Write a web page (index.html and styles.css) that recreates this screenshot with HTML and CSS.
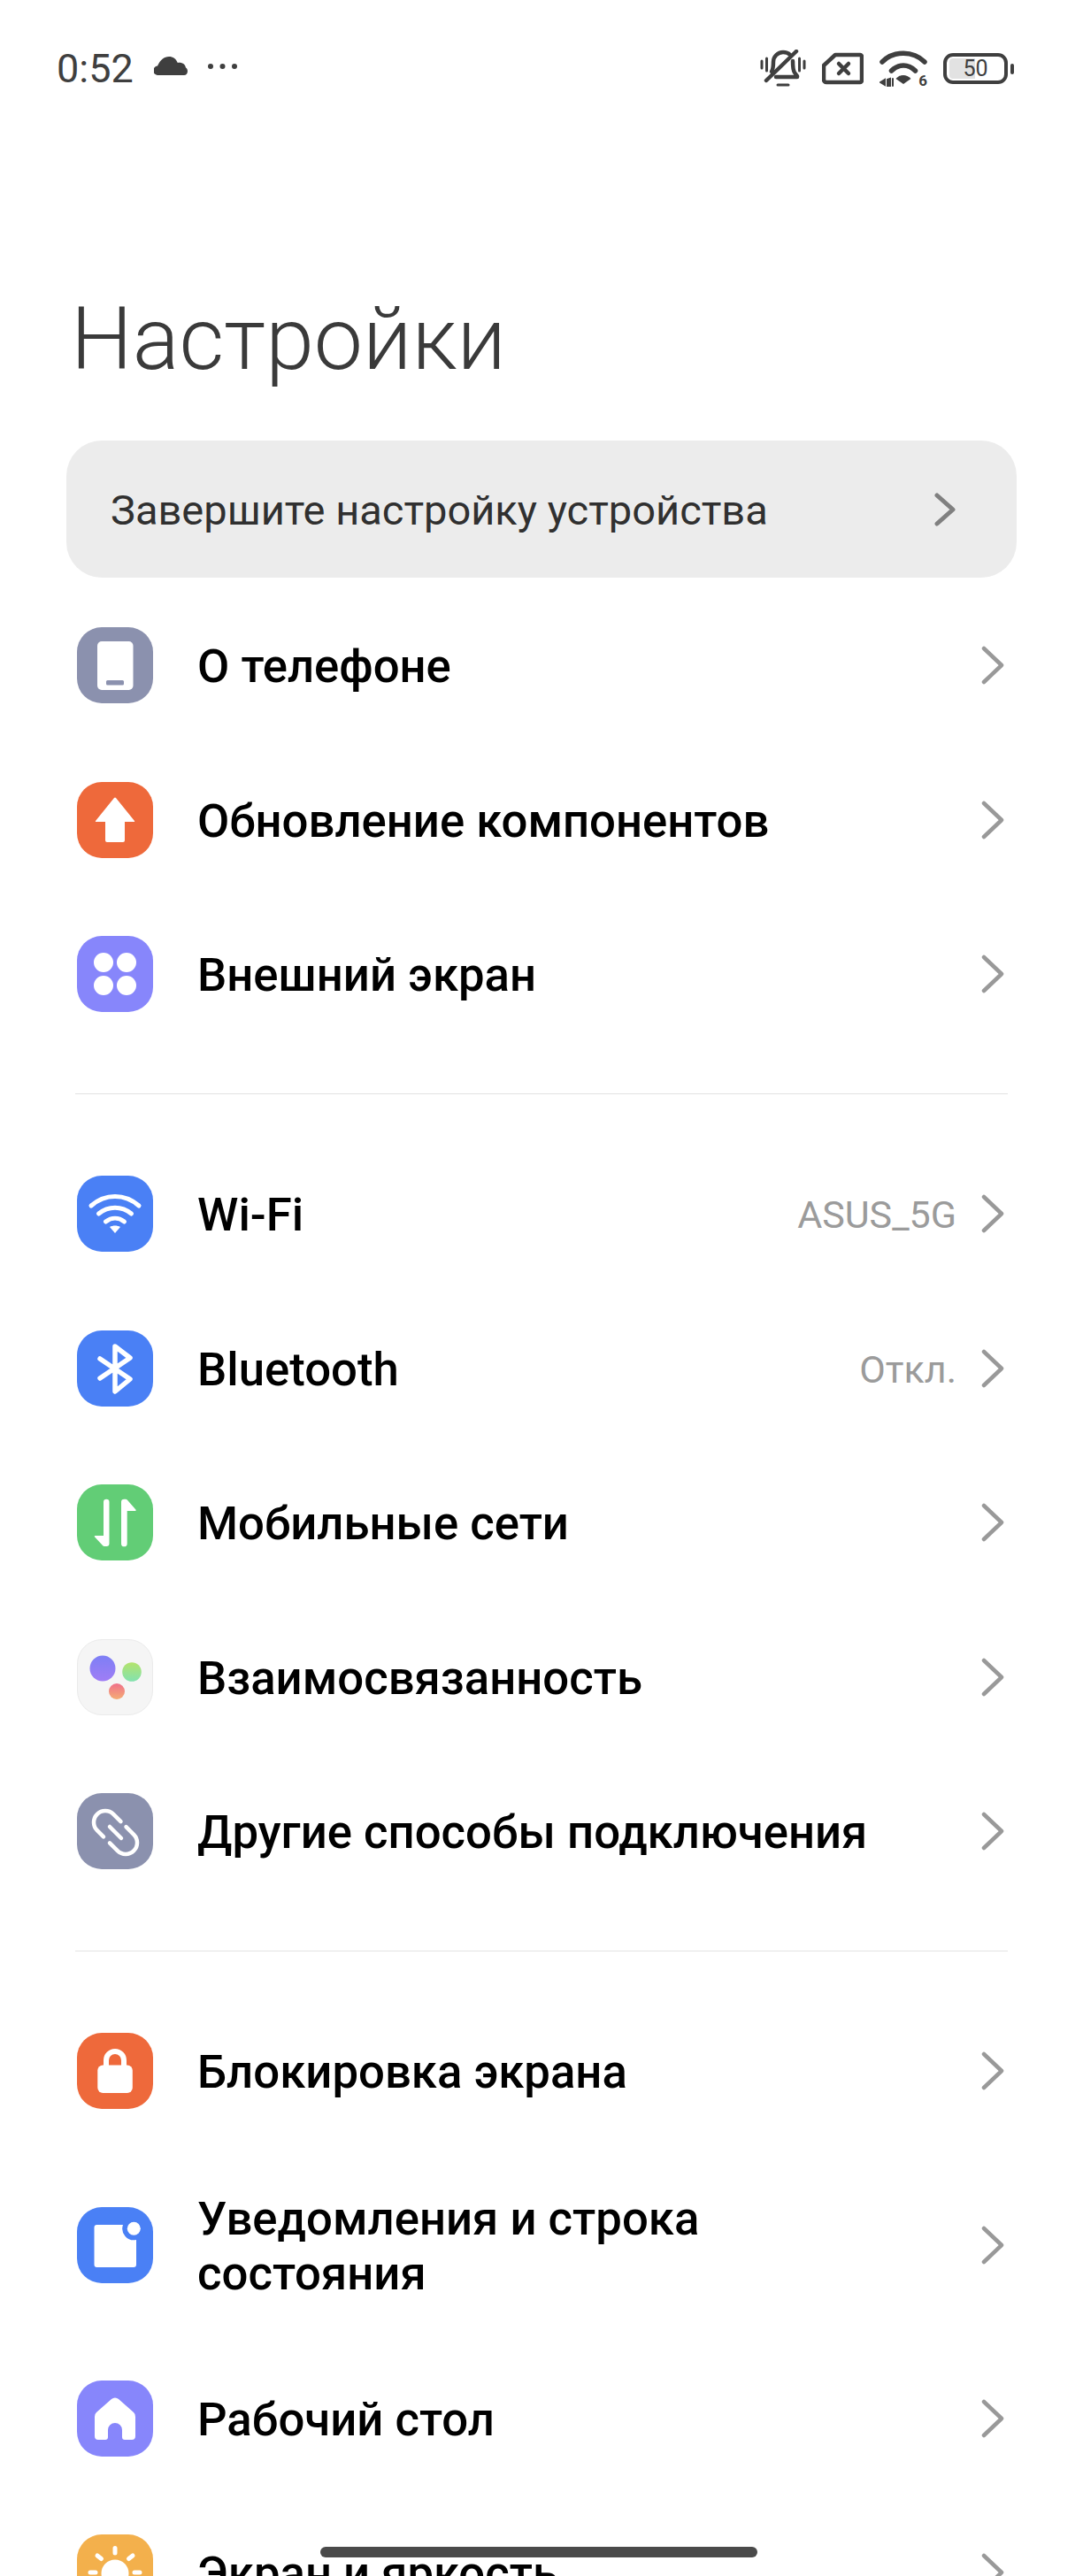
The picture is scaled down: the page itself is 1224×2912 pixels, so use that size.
FILE: index.html
```html
<!DOCTYPE html>
<html lang="ru">
<head>
<meta charset="utf-8">
<title>Настройки</title>
<link rel="stylesheet" href="styles.css">
</head>
<body>
<div class="page">
  <header class="status">
    <div class="status-left">
      <span class="time">0:52</span>
      <svg class="cloud" viewBox="0 0 38 21"><path d="M5 21a5 5 0 0 1-1-10.500C7 4 11.500 0 17 0c4.500 0 8 2.500 9.800 7 1-.300 2-.300 3-.200 3.500 .500 5.500 2.500 6.200 5.700 1.500 1 2 2.500 2 4 0 2.500-1.500 4.500-4 4.500z" fill="#3f3f3f"/></svg>
      <svg class="dots" viewBox="0 0 33 6"><circle cx="3" cy="3" r="3"/><circle cx="16.500" cy="3" r="3"/><circle cx="30" cy="3" r="3"/></svg>
    </div>
    <div class="status-right">
      <svg class="st-bell" viewBox="0 0 52 43" fill="none" stroke="#3f3f3f" stroke-width="4.500" stroke-linecap="round" stroke-linejoin="round"><path d="M2 13v8M7.500 10v14M44.500 10v14M50 13v8" stroke-width="3"/><path d="M13 25c2-3 2-7 2-11 0-6 5-11 11-11 3 0 6 1 8 3M37 13c0 5 0 10 2 13l3 4v1H18"/><path d="M7 35 41 2"/><path d="M20 40h12" stroke-width="3"/></svg>
      <svg class="st-sim" viewBox="0 0 47 37" fill="none" stroke="#3f3f3f" stroke-width="4.500" stroke-linejoin="round"><path d="M15 3h28a2 2 0 0 1 2 2v27a2 2 0 0 1-2 2H5a3 3 0 0 1-3-3V15z"/><path d="M19 13l11 11M30 13 19 24" stroke-linecap="round"/></svg>
      <div class="st-wifi">
        <svg viewBox="0 0 54 42" fill="none" stroke="#3f3f3f" stroke-width="5.500" stroke-linecap="round"><path d="M3 13C16 0 38 0 51 13M13.500 23c8-8 19-8 27 0"/><path d="M18.500 32c5-5.500 12-5.500 17 0l-8.500 6z" fill="#3f3f3f" stroke="none"/><path d="M1 36l5-3v6zM9 33l3-1v8h-3zM15 32v8" stroke-width="2" fill="#3f3f3f"/></svg>
        <span class="wifi-six">6</span>
      </div>
      <div class="battery">
        <div class="battery-body"><span class="battery-fill"></span><span class="battery-num">50</span></div>
        <span class="battery-nub"></span>
      </div>
    </div>
  </header>

  <h1 class="title">Настройки</h1>

  <div class="banner">
    <span class="banner-text">Завершите настройку устройства</span>
    <svg class="banner-chev" viewBox="0 0 24 38" fill="none"><path d="M3 3l18 16L3 35" stroke="#808080" stroke-width="5" stroke-linecap="round" stroke-linejoin="round"/></svg>
  </div>

  <section class="group group-first">
    <div class="row"><div class="icon c-slate"><svg viewBox="0 0 86 86"><rect x="23" y="16" width="40.500" height="55" rx="5" fill="#fff"/><rect x="33" y="60" width="20" height="5.500" rx="1.500" fill="#8b91ae"/></svg></div><span class="label">О телефоне</span><svg class="chev" viewBox="0 0 26 44"><path d="M3 3l20 19L3 41"/></svg></div>
    <div class="row"><div class="icon c-orange"><svg viewBox="0 0 86 86"><path d="M42 18a1.500 1.500 0 0 1 2 0L65 44a.600.600 0 0 1-.500 1H54v21a2 2 0 0 1-2 2H34a2 2 0 0 1-2-2V45H21.500a.600.600 0 0 1-.500-1z" fill="#fff"/></svg></div><span class="label">Обновление компонентов</span><svg class="chev" viewBox="0 0 26 44"><path d="M3 3l20 19L3 41"/></svg></div>
    <div class="row"><div class="icon c-violet"><svg viewBox="0 0 86 86" fill="#fff"><circle cx="30" cy="30" r="11"/><circle cx="56" cy="30" r="11"/><circle cx="30" cy="56" r="11"/><circle cx="56" cy="56" r="11"/></svg></div><span class="label">Внешний экран</span><svg class="chev" viewBox="0 0 26 44"><path d="M3 3l20 19L3 41"/></svg></div>
  </section>

  <hr class="divider">

  <section class="group">
    <div class="row"><div class="icon c-blue"><svg viewBox="0 0 86 86" fill="none" stroke="#fff" stroke-width="5" stroke-linecap="round"><path d="M16 34c16-14 38-14 54 0M24.500 43c11-9 26-9 37 0M32.500 52c6.500-5 14.500-5 21 0"/><path d="M37 58c3.500-2 8.500-2 12 0l-6 7z" fill="#fff" stroke="none"/></svg></div><span class="label">Wi-Fi</span><span class="value">ASUS_5G</span><svg class="chev" viewBox="0 0 26 44"><path d="M3 3l20 19L3 41"/></svg></div>
    <div class="row"><div class="icon c-blue"><svg viewBox="0 0 86 86" fill="none" stroke="#fff" stroke-width="5.500" stroke-linecap="round" stroke-linejoin="round"><path d="M26 32 60 55 43 69V18l17 13-34 23"/></svg></div><span class="label">Bluetooth</span><span class="value">Откл.</span><svg class="chev" viewBox="0 0 26 44"><path d="M3 3l20 19L3 41"/></svg></div>
    <div class="row"><div class="icon c-green"><svg viewBox="0 0 86 86" fill="#fff"><path d="M30 58H20.500a.800.800 0 0 0-.600 1.300L29 69a3 3 0 0 0 2 1h2a3.300 3.300 0 0 0 3.500-3.300V20a3.250 3.250 0 0 0-6.500 0z"/><path d="M50 20a3.300 3.300 0 0 1 3.300-3.300H55a3 3 0 0 1 2 1l9.600 11a.800.800 0 0 1-.600 1.300h-9.300V67a3.350 3.350 0 0 1-6.700 0z"/></svg></div><span class="label">Мобильные сети</span><svg class="chev" viewBox="0 0 26 44"><path d="M3 3l20 19L3 41"/></svg></div>
    <div class="row"><div class="icon c-light"><svg viewBox="0 0 84 84"><defs><linearGradient id="g1" x1="0" y1="0" x2="0" y2="1"><stop offset="0" stop-color="#7d7ff5"/><stop offset="1" stop-color="#a07df5"/></linearGradient><linearGradient id="g2" x1="0" y1="0" x2="0" y2="1"><stop offset="0" stop-color="#b4e36c"/><stop offset="1" stop-color="#82e2b0"/></linearGradient><linearGradient id="g3" x1="0" y1="0" x2="0" y2="1"><stop offset="0" stop-color="#f0708a"/><stop offset="1" stop-color="#f4ad74"/></linearGradient></defs><circle cx="28" cy="32" r="14.500" fill="url(#g1)"/><circle cx="61" cy="36" r="10.800" fill="url(#g2)"/><circle cx="44" cy="58" r="9" fill="url(#g3)"/></svg></div><span class="label">Взаимосвязанность</span><svg class="chev" viewBox="0 0 26 44"><path d="M3 3l20 19L3 41"/></svg></div>
    <div class="row"><div class="icon c-slate"><svg viewBox="0 0 86 86" fill="none" stroke="#fff" stroke-width="4.500" stroke-linecap="round"><path d="M30 49.400 22.800 42.200A13 13 0 0 1 41.200 23.800L49.500 32.100"/><path d="M55.500 38.100 64.200 46.800A13 13 0 0 1 45.800 65.200L37 56.400"/><path d="M37 38 50 51"/></svg></div><span class="label">Другие способы подключения</span><svg class="chev" viewBox="0 0 26 44"><path d="M3 3l20 19L3 41"/></svg></div>
  </section>

  <hr class="divider">

  <section class="group">
    <div class="row"><div class="icon c-orange"><svg viewBox="0 0 86 86"><path d="M33 38V31a10 10 0 0 1 20 0v7" fill="none" stroke="#fff" stroke-width="6"/><rect x="23.300" y="36.500" width="39.500" height="31.500" rx="6" fill="#fff"/></svg></div><span class="label">Блокировка экрана</span><svg class="chev" viewBox="0 0 26 44"><path d="M3 3l20 19L3 41"/></svg></div>
    <div class="row row-tall"><div class="icon c-blue-2"><svg viewBox="0 0 86 86"><path d="M22.500 20H52A13 13 0 0 0 67 37V65a3 3 0 0 1-3 3H22.500a3 3 0 0 1-3-3V23a3 3 0 0 1 3-3z" fill="#fff"/><circle cx="64.300" cy="24.300" r="7.500" fill="#fff"/></svg></div><span class="label">Уведомления и строка<br>состояния</span><svg class="chev" viewBox="0 0 26 44"><path d="M3 3l20 19L3 41"/></svg></div>
    <div class="row"><div class="icon c-violet"><svg viewBox="0 0 86 86"><path d="M39 21a6 6 0 0 1 8 0l17 15a6 6 0 0 1 2 5v22a4 4 0 0 1-4 4H54a3 3 0 0 1-3-3V56a8 8 0 0 0-16 0v8a3 3 0 0 1-3 3h-8a4 4 0 0 1-4-4V41a6 6 0 0 1 2-5z" fill="#fff"/></svg></div><span class="label">Рабочий стол</span><svg class="chev" viewBox="0 0 26 44"><path d="M3 3l20 19L3 41"/></svg></div>
    <div class="row"><div class="icon c-amber"><svg viewBox="0 0 86 86"><circle cx="43" cy="44" r="15.500" fill="#fff"/><g stroke="#fff" stroke-width="5" stroke-linecap="round"><path d="M43 15.500V21M23 24l4.500 3.500M63 24l-4.500 3.500M15 43h6M65 43h6"/></g></svg></div><span class="label">Экран и яркость</span><svg class="chev" viewBox="0 0 26 44"><path d="M3 3l20 19L3 41"/></svg></div>
  </section>

  <div class="home-bar"></div>
</div>
</body>
</html>
```
FILE: styles.css
```css
* { box-sizing: border-box; }
html, body { margin: 0; padding: 0; height: 100%; overflow: hidden; background: #fff; }
.page { position: relative; width: 1224px; height: 2912px; overflow: hidden; font-family: Roboto, "Noto Sans", sans-serif; color: #000; }

.status { display: flex; justify-content: space-between; align-items: center; height: 56px; margin: 49px 0 273px; padding: 0 78px 0 64px; }
.status-left { display: flex; align-items: center; }
.time { font-size: 45px; line-height: 56px; color: #3f3f3f; width: 110px; margin-top: 2px; }
.cloud { width: 38px; height: 21px; margin-top: -6px; }
.dots { width: 33px; height: 6px; margin: -4px 0 0 23px; fill: #3f3f3f; }
.status-right { display: flex; align-items: center; margin-top: 1px; }
.st-bell { width: 52px; height: 43px; margin-right: 18px; }
.st-sim { width: 47px; height: 37px; margin-right: 18px; }
.st-wifi { position: relative; width: 54px; height: 42px; margin-right: 18px; }
.st-wifi svg { display: block; width: 54px; height: 42px; }
.wifi-six { position: absolute; right: 0; bottom: -1px; font-size: 17px; font-weight: 700; line-height: 17px; color: #3f3f3f; }
.battery { display: flex; align-items: center; gap: 3px; }
.battery-body { position: relative; width: 73px; height: 35px; border: 4px solid #3f3f3f; border-radius: 11px; display: flex; align-items: center; justify-content: center; }
.battery-fill { position: absolute; left: 3px; top: 2px; bottom: 2px; width: 29px; background: #e2e2e2; border-radius: 4px 0 0 4px; }
.battery-num { position: relative; font-size: 25px; line-height: 27px; color: #3f3f3f; }
.battery-nub { width: 4px; height: 12px; background: #3f3f3f; border-radius: 2px; }

.title { margin: -53px 0 0 80px; height: 173px; font-size: 98.500px; font-weight: 300; line-height: 117px; color: #3a3a3a; }

.banner { display: flex; align-items: center; justify-content: space-between; width: 1074px; height: 155px; margin-left: 75px; padding: 0 69px 0 50px; background: #ececec; border-radius: 40px; }
.banner-text { font-size: 47px; line-height: 56px; padding-top: 2px; color: #303030; }
.banner-chev { width: 24px; height: 38px; }

.group-first { margin-top: 12px; }
.row { display: flex; align-items: center; height: 174.500px; padding: 0 89px 0 87px; }
.row-tall { height: 218px; }
.icon { flex: none; width: 86px; height: 86px; border-radius: 28px; overflow: hidden; }
.icon svg { display: block; width: 100%; height: 100%; }
.c-slate { background: #8b91ae; }
.c-orange { background: #ee693b; }
.c-violet { background: #8786fb; }
.c-blue { background: #4a80f5; }
.c-blue-2 { background: #4a80f5; }
.c-green { background: #62cd76; }
.c-amber { background: #f3b04c; }
.c-light { background: #f5f5f5; border: 1px solid #ebebeb; }
.label { flex: 1; margin-left: 50px; padding-top: 2px; font-size: 52.700px; font-weight: 500; line-height: 62px; color: #000; }
.value { padding-top: 2px; font-size: 43px; color: #9b9b9b; margin-right: 28px; }
.chev { flex: none; width: 26px; height: 44px; fill: none; stroke: #999; stroke-width: 4.500; stroke-linecap: round; stroke-linejoin: round; }

.divider { height: 1px; margin: 47px 85px 48.500px 85px; border: 0; background: #e2e2e2; }

.home-bar { position: absolute; left: 362px; top: 2879px; width: 494px; height: 12px; background: #4a4a4a; border-radius: 6px; }
```
